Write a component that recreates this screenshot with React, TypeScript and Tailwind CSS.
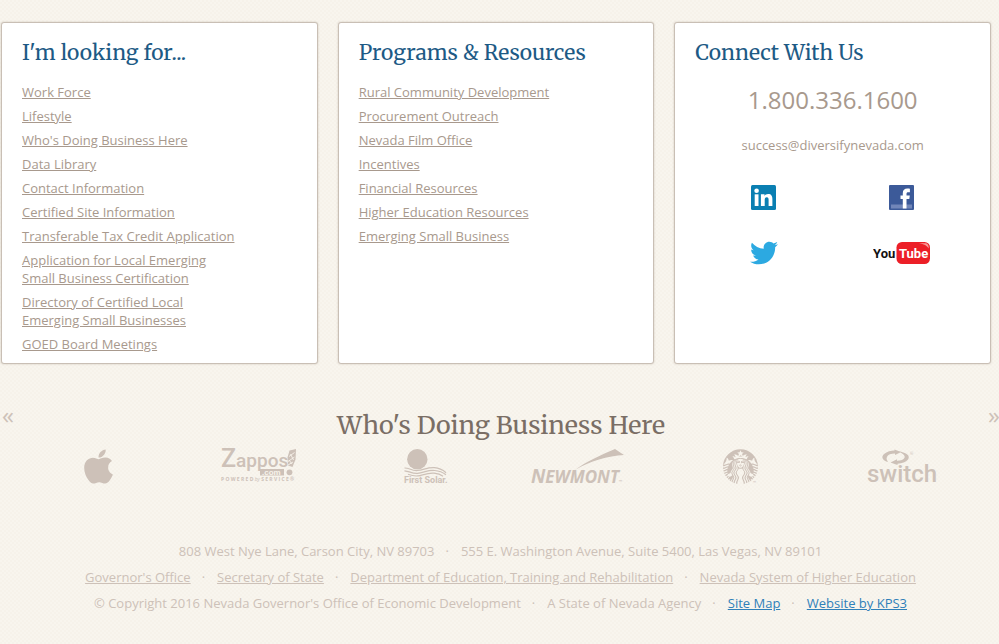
import React from "react";
import { FaApple, FaTwitter } from "react-icons/fa";
import { SiStarbucks } from "react-icons/si";

const lookingFor = [
  "Work Force",
  "Lifestyle",
  "Who's Doing Business Here",
  "Data Library",
  "Contact Information",
  "Certified Site Information",
  "Transferable Tax Credit Application",
  "Application for Local Emerging Small Business Certification",
  "Directory of Certified Local Emerging Small Businesses",
  "GOED Board Meetings",
];

const programs = [
  "Rural Community Development",
  "Procurement Outreach",
  "Nevada Film Office",
  "Incentives",
  "Financial Resources",
  "Higher Education Resources",
  "Emerging Small Business",
];

function Card({ title, children }: { title: string; children: React.ReactNode }) {
  return (
    <section className="rounded-[3px] border border-[#c9bfb5] bg-white px-5 pt-[15px] pb-[10px] shadow-[0_0_2px_rgba(120,100,80,0.35)]">
      <h2 className="mb-[15px] font-[Merriweather,'DejaVu_Serif_Condensed','DejaVu_Serif',serif] text-[21px] leading-[30px] text-[#1d5a85]">
        {title}
      </h2>
      {children}
    </section>
  );
}

function LinkList({ items }: { items: string[] }) {
  return (
    <ul className="flex flex-col gap-[6px]">
      {items.map((item) => (
        <li key={item} className="max-w-[220px] leading-[18px]">
          <a href="#" className="text-[#a8998d] underline">
            {item}
          </a>
        </li>
      ))}
    </ul>
  );
}

function LinkedInLogo() {
  return (
    <svg width="25" height="25" viewBox="0 0 25 25" aria-hidden="true">
      <rect width="25" height="25" rx="1.5" fill="#0a7fb2" />
      <g fill="#fff">
        <circle cx="5.6" cy="5.7" r="2.3" />
        <rect x="3.7" y="9.3" width="3.8" height="11.7" />
        <path d="M9.9 9.3h3.6v1.6c.7-1.2 1.9-1.9 3.6-1.9 3.3 0 4.3 2 4.3 5.3V21h-3.8v-6c0-1.6-.3-2.8-1.8-2.8-1.6 0-2.1 1.2-2.1 2.8v6H9.9z" />
      </g>
    </svg>
  );
}

function FacebookLogo() {
  return (
    <svg width="25" height="25" viewBox="0 0 25 25" aria-hidden="true">
      <rect width="25" height="25" rx="1" fill="#3c5a99" />
      <rect x="2" y="19.5" width="21" height="4" fill="#7186b9" />
      <path
        fill="#fff"
        d="M13.8 23.5v-9.4h-2.3v-3.6h2.3V8.3c0-3.2 1.7-4.7 4.6-4.7 1.1 0 1.9.1 2.5.2v3.4h-1.7c-1.3 0-1.7.6-1.7 1.7v1.6h3.3l-.5 3.6h-2.8v9.4z"
      />
    </svg>
  );
}

function YouTubeLogo() {
  return (
    <svg
      width="57"
      height="24"
      viewBox="0 0 57 24"
      aria-hidden="true"
      className="font-[Roboto,sans-serif] font-bold"
    >
      <rect x="23.5" y="1" width="33.5" height="22" rx="5.5" fill="#ec1f27" />
      <path d="M46 2.2h6c2.5 0 3.8 1.5 3.8 5.3-1.5-2.8-5-4.7-9.8-5.300z" fill="#f79a97" />
      <text x="0" y="17" fontSize="13" fill="#111">You</text>
      <text x="26" y="17" fontSize="13" fill="#fff">Tube</text>
    </svg>
  );
}

const logo = "h-10 shrink-0 overflow-visible fill-[#cdc1b8] text-[#cdc1b8]";

function AppleLogo() {
  return (
    <svg width="73" viewBox="0 0 73 40" className={logo} role="img" aria-label="Apple">
      <FaApple x={25} y={0} size={39} />
    </svg>
  );
}

function ZapposLogo() {
  return (
    <svg width="102" viewBox="0 0 102 40" className={logo} role="img" aria-label="Zappos.com">
      <text x="14" y="20" fontSize="25" className="font-[Roboto,sans-serif] font-medium">
        Z<tspan fontSize="19">appos</tspan>
      </text>
      <path d="M82.5 3.5l6.5-1.5-.5 10.5-3 7.5-4.5-1.5-.5-8z" />
      <path d="M82 9.5l5.5-4M81 14.5l6.5-4.5M81 18l5-3M83.5 7l3 6M82 13l3 4" stroke="#f7f3eb" strokeWidth=".9" fill="none" />
      <circle cx="82.500" cy="25.300" r="2.900" />
      <rect x="53" y="22" width="24" height="6.500" />
      <text x="55" y="27.500" fontSize="8" className="fill-[#f7f3eb] font-['Liberation_Sans'] font-bold">
        .com
      </text>
      <text x="14" y="34" fontSize="5" className="font-['Open_Sans'] font-bold">
        P O W E R E D <tspan className="font-normal italic">by</tspan> S E R V I C E ®
      </text>
    </svg>
  );
}

function FirstSolarLogo() {
  return (
    <svg width="62" viewBox="0 0 62 40" className={logo} role="img" aria-label="First Solar">
      <circle cx="28.3" cy="12.2" r="10.2" />
      <path
        d="M15.5 21c5.500 0 7 3 13 2.500s10-3.300 17-2.800c5 .3 8 2 11.500 5M15.500 23.800c5.500.3 7 3 13 2.500s10-3.300 17-2.800c5 .3 8 1.500 11.500 4.300M19 27.300c4 1.500 6 2 10 1.600s9-3.200 16-2.700c4 .3 7 1.500 9 3"
        fill="none"
        stroke="#cdc1b8"
        strokeWidth="1.200"
      />
      <text x="15" y="36" fontSize="9" className="font-[Roboto,sans-serif] font-bold">
        First Solar.
      </text>
    </svg>
  );
}

function NewmontLogo() {
  return (
    <svg width="102" viewBox="0 0 102 40" className={logo} role="img" aria-label="Newmont">
      <path d="M44 23C56 14 70 8 84 2l9 6C77 9 59 14 44 23z" />
      <text x="0" y="36" fontSize="19" className="font-['Open_Sans'] font-bold italic">
        N<tspan fontSize="17">EWMONT</tspan>
        <tspan fontSize="4">™</tspan>
      </text>
    </svg>
  );
}

function StarbucksLogo() {
  return (
    <svg width="58" viewBox="0 0 58 40" className={logo} role="img" aria-label="Starbucks">
      <SiStarbucks x={10} y={2} size={35} />
      <text x="40" y="37" fontSize="4" className="font-['Open_Sans']">™</text>
    </svg>
  );
}

function SwitchLogo() {
  return (
    <svg width="94" viewBox="0 0 94 40" className={logo} role="img" aria-label="Switch">
      <path d="M37 15c-5-1-7.5-5-4-8 3-2.500 7-3.500 10.500-3.500V2.500L50 5l-6 3V6.500c-4 0-7 1-8 3.200-1 2 0 3.800 1 5.300z" />
      <path d="M47.500 4.500c7 .5 12.500 4 9.500 8-2 2.700-6 4-10.500 4.200V18l-7-2.500 6.500-3.200v1.500c4-.1 6.500-1 7.500-3 .8-2-1-4-6-6.300z" />
      <text x="16" y="35" fontSize="24" className="font-[Roboto,sans-serif] font-medium">
        switch
      </text>
      <text x="59" y="8" fontSize="4" className="font-['Open_Sans']">®</text>
    </svg>
  );
}

function Dot() {
  return <span className="mr-3 ml-[11px]">·</span>;
}

export default function App() {
  const social = [
    { name: "LinkedIn", mark: <LinkedInLogo /> },
    { name: "Facebook", mark: <FacebookLogo /> },
    { name: "Twitter", mark: <FaTwitter size={28} className="text-[#2ca9e1]" /> },
    { name: "YouTube", mark: <YouTubeLogo /> },
  ];
  return (
    <div className="min-h-screen bg-[#f8f5ee] bg-[conic-gradient(#f6f2ea_25%,transparent_0_50%,#f6f2ea_0_75%,transparent_0)] bg-size-[4px_4px] pt-[22px] font-['Open_Sans',sans-serif] text-[13px] text-[#a8998d]">
      <main>
        <div className="mr-2 ml-px grid grid-cols-3 gap-5">
          <Card title="I'm looking for...">
            <LinkList items={lookingFor} />
          </Card>
          <Card title="Programs & Resources">
            <LinkList items={programs} />
          </Card>
          <Card title="Connect With Us">
            <p className="-mt-px text-center text-2xl leading-9">1.800.336.1600</p>
            <p className="mt-[18px] text-center leading-[18px]">success@diversifynevada.com</p>
            <div className="mt-[15px] grid grid-cols-2">
              {social.map((s) => (
                <a key={s.name} href="#" aria-label={s.name} className="flex h-14 items-center justify-center">
                  {s.mark}
                </a>
              ))}
            </div>
          </Card>
        </div>

        <section className="mt-[39px]">
          <div className="flex justify-between">
            <button type="button" aria-label="Previous" className="ml-[2px] h-6 text-2xl leading-6 text-[#cdc1b8]">«</button>
            <h2 className="mt-[2px] font-[Merriweather,'DejaVu_Serif_Condensed','DejaVu_Serif',serif] text-[25px] leading-10 text-[#7a6e65]">
              Who's Doing Business Here
            </h2>
            <button type="button" aria-label="Next" className="-mr-px h-6 text-2xl leading-6 text-[#cdc1b8]">»</button>
          </div>
          <div className="mt-[2px] flex justify-between px-[54px]">
            <AppleLogo />
            <ZapposLogo />
            <FirstSolarLogo />
            <NewmontLogo />
            <StarbucksLogo />
            <SwitchLogo />
          </div>
        </section>
      </main>

      <footer className="mt-[51px] pl-[2px] text-center leading-[26px] text-[#cdc1b8]">
        <p>
          808 West Nye Lane, Carson City, NV 89703
          <Dot />
          555 E. Washington Avenue, Suite 5400, Las Vegas, NV 89101
        </p>
        <p>
          <a href="#" className="underline">Governor's Office</a>
          <Dot />
          <a href="#" className="underline">Secretary of State</a>
          <Dot />
          <a href="#" className="underline">Department of Education, Training and Rehabilitation</a>
          <Dot />
          <a href="#" className="underline">Nevada System of Higher Education</a>
        </p>
        <p>
          © Copyright 2016 Nevada Governor's Office of Economic Development
          <Dot />
          A State of Nevada Agency
          <Dot />
          <a href="#" className="text-[#2f80b9] underline">Site Map</a>
          <Dot />
          <a href="#" className="text-[#2f80b9] underline">Website by KPS3</a>
        </p>
      </footer>
    </div>
  );
}
